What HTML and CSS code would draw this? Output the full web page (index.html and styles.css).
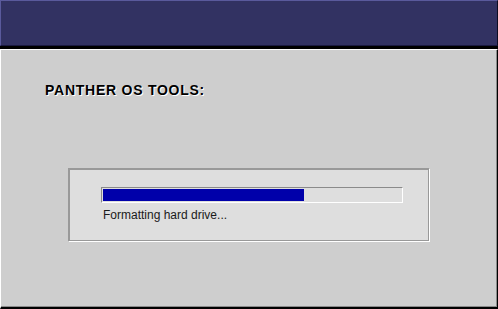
FILE: index.html
```html
<!DOCTYPE html>
<html>
<head>
<meta charset="utf-8">
<link rel="stylesheet" href="styles.css">
</head>
<body>
<div class="screen">
  <div class="titlebar"></div>
  <div class="main">
    <div class="heading">PANTHER OS TOOLS:</div>
    <div class="panel">
      <div class="bar"><div class="fill" style="width:201px"></div></div>
      <div class="status">Formatting hard drive...</div>
    </div>
  </div>
</div>
</body>
</html>
```

FILE: styles.css
```css
html, body {
  margin: 0;
  padding: 0;
  background: #cecece;
}
.screen {
  width: 498px;
  height: 309px;
  display: flex;
  flex-direction: column;
  font-family: "Liberation Sans", Arial, sans-serif;
}
.titlebar {
  height: 44px;
  background: #323262;
  border-top: 1px solid #5a5a9c;
  border-left: 1px solid #5a5a9c;
  border-right: 1px solid #0c0c22;
  border-bottom: 1px solid #1a1a40;
  box-shadow: 0 3px 0 #000;
  margin-bottom: 3px;
}
.main {
  flex: 1;
  background: #cecece;
  border-top: 1px solid #ffffff;
  border-left: 1px solid #ffffff;
  border-right: 1px solid #000;
  border-bottom: 2px solid #000;
  box-shadow: inset -1px -1px 0 #8a8a8a;
  padding: 32px 0 0 44px;
}
.heading {
  font-size: 14px;
  line-height: 16px;
  font-weight: bold;
  color: #000;
  text-shadow: 1px 1px 0 #ffffff;
  letter-spacing: 0.75px;
}
.panel {
  margin-top: 70px;
  margin-left: 23px;
  width: 328px;
  background: #dedede;
  border-top: 1px solid #999;
  border-left: 1px solid #999;
  border-right: 1px solid #fff;
  border-bottom: 1px solid #fff;
  box-shadow: inset 1px 1px 0 #999, inset -1px -1px 0 #999;
  padding: 18px 0 19px 32px;
}
.bar {
  width: 298px;
  height: 12px;
  padding: 1px;
  border-top: 1px solid #8a8a8a;
  border-left: 1px solid #8a8a8a;
  border-right: 1px solid #fff;
  border-bottom: 1px solid #fff;
}
.fill {
  height: 12px;
  background: #0000aa;
}
.status {
  margin-top: 5px;
  font-size: 12px;
  line-height: 14px;
  color: #1a1a1a;
  padding-left: 2px;
}
```
